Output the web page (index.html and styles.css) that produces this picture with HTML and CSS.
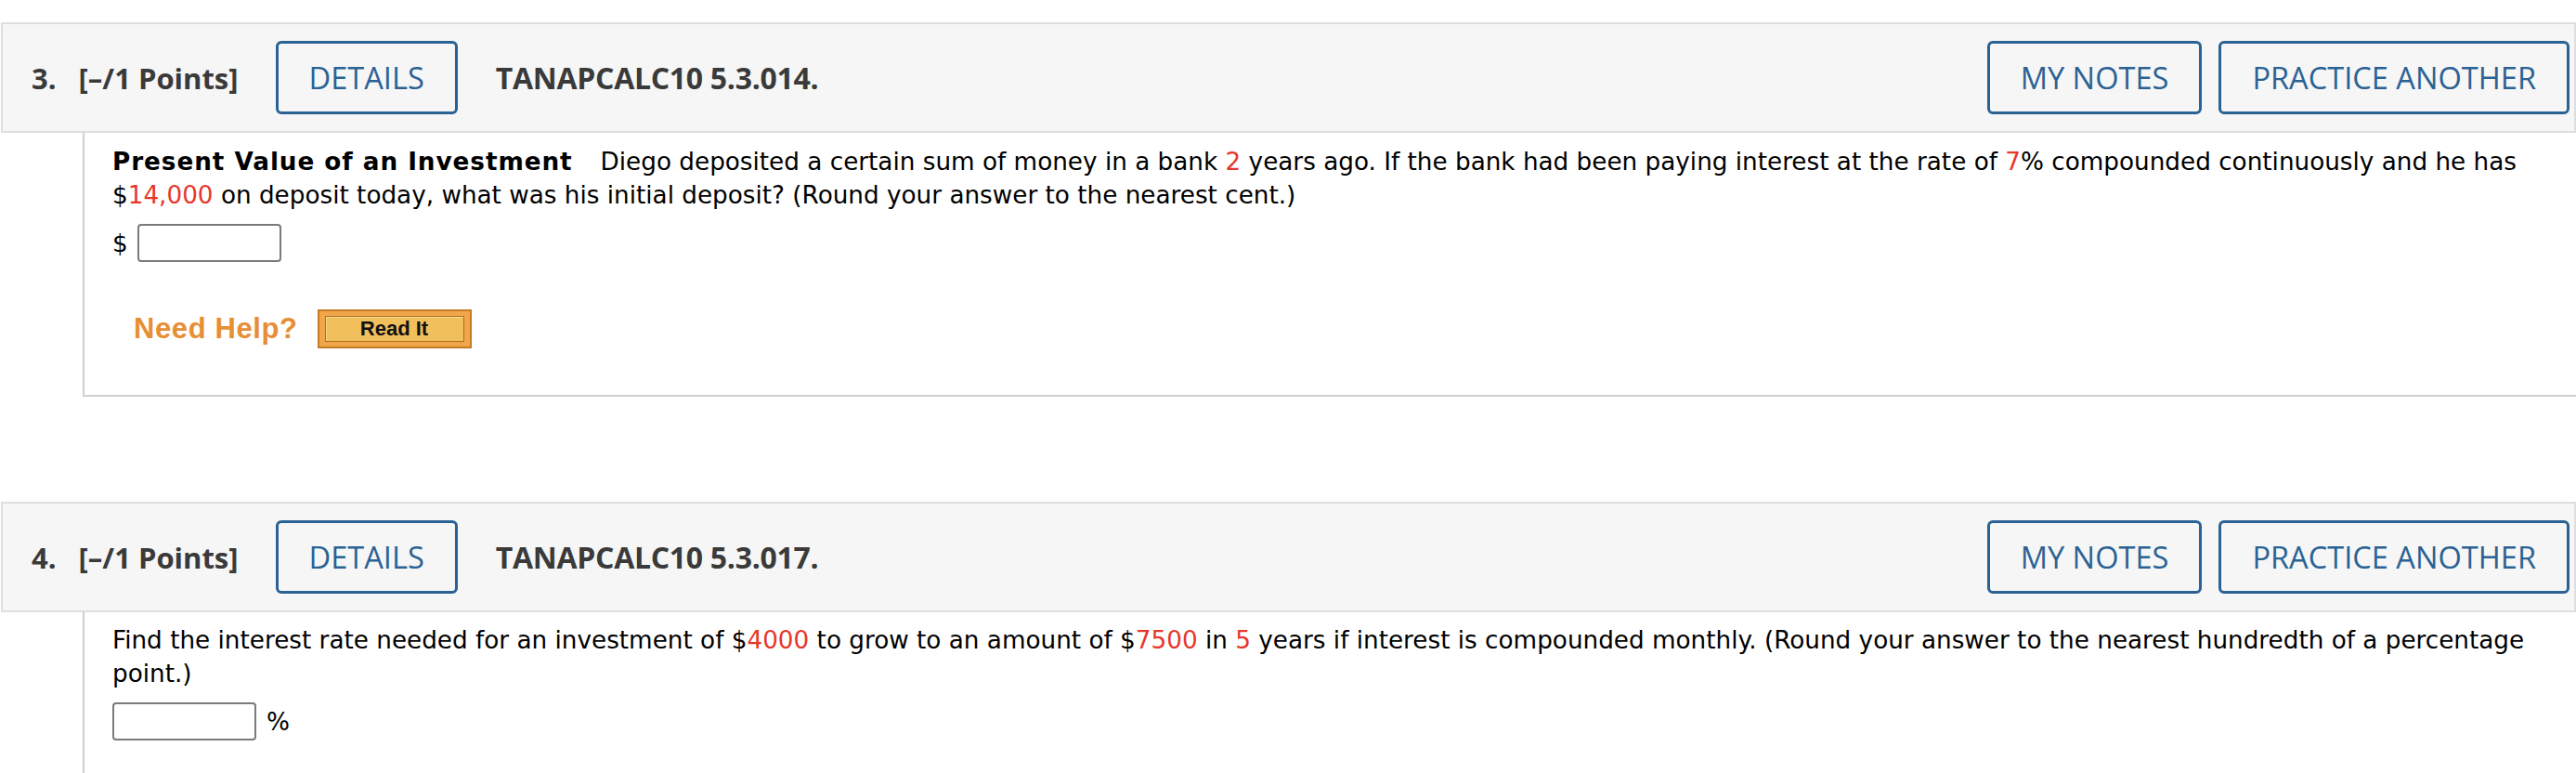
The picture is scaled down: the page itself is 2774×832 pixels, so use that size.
FILE: index.html
```html
<!DOCTYPE html>
<html>
<head>
<meta charset="utf-8">
<link rel="stylesheet" href="styles.css">
</head>
<body>
<div class="question">
  <div class="qhead">
    <span class="qnum">3.</span>
    <span class="qpts">[–/1 Points]</span>
    <button class="btn btn-details">DETAILS</button>
    <span class="qtitle">TANAPCALC10 5.3.014.</span>
    <span class="spacer"></span>
    <button class="btn">MY NOTES</button>
    <button class="btn">PRACTICE ANOTHER</button>
  </div>
  <div class="qbody">
    <p class="qtext"><b class="qlabel">Present Value of an Investment</b>Diego deposited a certain sum of money in a bank <span class="red">2</span> years ago. If the bank had been paying interest at the rate of <span class="red">7</span>% compounded continuously and he has $<span class="red">14,000</span> on deposit today, what was his initial deposit? (Round your answer to the nearest cent.)</p>
    <div class="answer">
      <span class="unit-pre">$</span>
      <input class="ans-input" type="text">
    </div>
    <div class="help">
      <span class="need-help">Need Help?</span>
      <span class="readit"><span class="readit-inner">Read It</span></span>
    </div>
  </div>
</div>

<div class="question q2">
  <div class="qhead">
    <span class="qnum">4.</span>
    <span class="qpts">[–/1 Points]</span>
    <button class="btn btn-details">DETAILS</button>
    <span class="qtitle">TANAPCALC10 5.3.017.</span>
    <span class="spacer"></span>
    <button class="btn">MY NOTES</button>
    <button class="btn">PRACTICE ANOTHER</button>
  </div>
  <div class="qbody qbody-open">
    <p class="qtext">Find the interest rate needed for an investment of $<span class="red">4000</span> to grow to an amount of $<span class="red">7500</span> in <span class="red">5</span> years if interest is compounded monthly. (Round your answer to the nearest hundredth of a percentage point.)</p>
    <div class="answer answer2">
      <input class="ans-input" type="text">
      <span class="unit-post">%</span>
    </div>
  </div>
</div>
</body>
</html>
```

FILE: styles.css
```css
html, body {
  margin: 0;
  padding: 0;
  background: #ffffff;
}
body {
  padding-top: 24px;
  width: 2774px;
  overflow: hidden;
}

.question {
  margin-left: 1px;
}
.q2 {
  margin-top: 113px;
}

.qhead {
  display: flex;
  align-items: center;
  box-sizing: border-box;
  height: 119px;
  background: #f6f6f6;
  border: 2px solid #dedede;
  padding: 0 5px 0 31px;
  font-family: "Open Sans", "Liberation Sans", sans-serif;
  color: #3a3a3a;
  font-size: 31px;
}
.qnum {
  font-weight: 700;
  margin-right: 24px;
}
.qpts {
  font-weight: 700;
  margin-right: 40px;
}
.qtitle {
  font-weight: 700;
  font-size: 32px;
  margin-left: 41px;
  letter-spacing: -0.3px;
}
.spacer {
  flex: 1;
}

.btn {
  box-sizing: border-box;
  height: 79px;
  padding: 0 33px;
  border: 3px solid #2a6294;
  border-radius: 6px;
  background: transparent;
  color: #2a6294;
  font-family: "Open Sans", "Liberation Sans", sans-serif;
  font-size: 32.6px;
  font-weight: 500;
  margin-left: 18px;
}
.btn-details {
  margin-left: 0;
}

.qbody {
  margin-left: 88px;
  border-left: 2px solid #d0d0d0;
  border-bottom: 2px solid #d0d0d0;
  padding: 13px 30px 50px 30px;
  font-family: "DejaVu Sans", Verdana, sans-serif;
  font-size: 26.25px;
  line-height: 36px;
  color: #000;
}
.qbody-open {
  border-bottom: none;
  padding-top: 12px;
  height: 200px;
}
.qtext {
  margin: 0;
}
.qlabel {
  font-weight: 700;
  letter-spacing: 0.95px;
  margin-right: 30px;
}
.red {
  color: #e6372a;
}

.answer {
  display: flex;
  align-items: center;
  margin-top: 13px;
}
.answer2 {
  margin-top: 13px;
}
.unit-pre {
  margin-right: 10px;
}
.unit-post {
  margin-left: 11px;
}
.ans-input {
  box-sizing: border-box;
  width: 155px;
  height: 41px;
  border: 2px solid #7a7a7a;
  border-radius: 4px;
  background: #fff;
  margin: 0;
}

.help {
  display: flex;
  align-items: center;
  margin-top: 51px;
  padding-left: 23px;
}
.need-help {
  font-family: "Liberation Sans", Arial, sans-serif;
  font-weight: 700;
  font-size: 31px;
  color: #e78f35;
  letter-spacing: 0.6px;
  margin-right: 21px;
  line-height: 42px;
}
.readit {
  box-sizing: border-box;
  display: flex;
  width: 166px;
  height: 42px;
  padding: 5px 6px;
  border: 2px solid #c47a26;
  background: #f2a649;
}
.readit-inner {
  flex: 1;
  display: flex;
  align-items: center;
  justify-content: center;
  border: 1px solid #a8711f;
  box-shadow: inset 1px 1px 0 #f9d990;
  background: #f2bf5d;
  font-family: "Liberation Sans", Arial, sans-serif;
  font-weight: 700;
  font-size: 22px;
  color: #111;
}
```
